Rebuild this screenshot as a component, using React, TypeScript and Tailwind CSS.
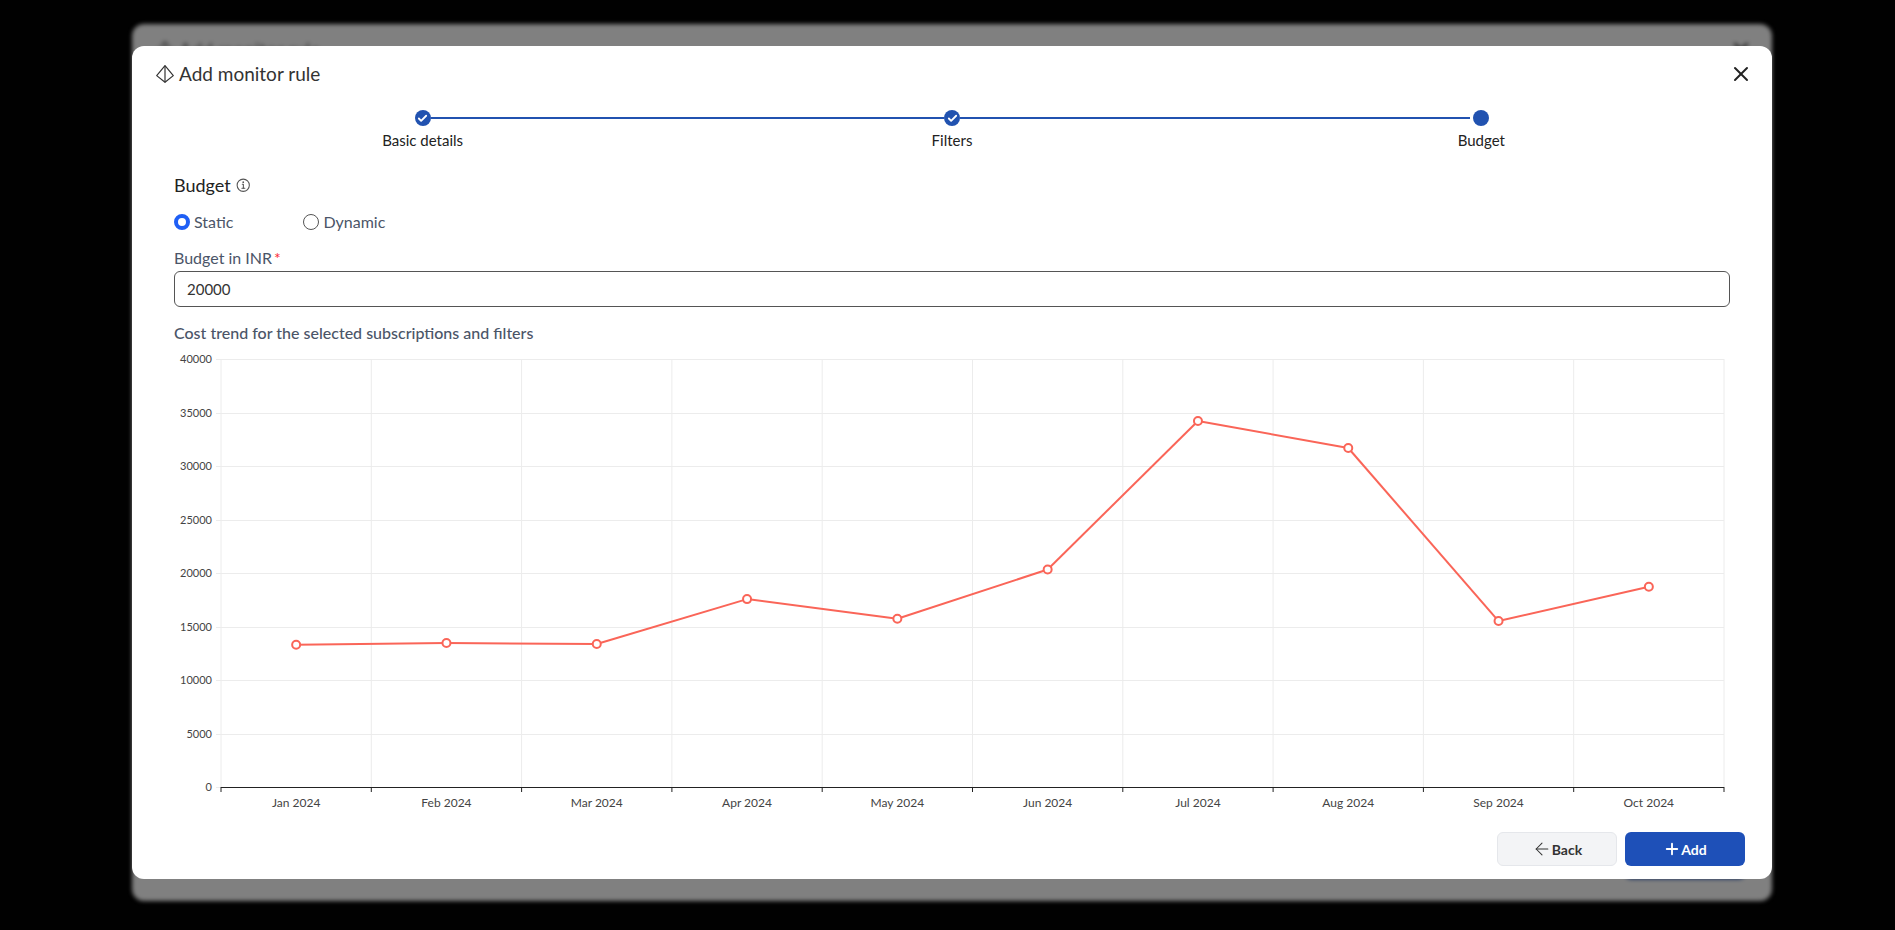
import { useState } from "react"
import { IoInformationCircleOutline } from "react-icons/io5"
import { ArrowLeft, Check, Plus, X } from "lucide-react"

const steps = [
    { label: "Basic details", done: true },
    { label: "Filters", done: true },
    { label: "Budget", done: false },
]

const costs = [
    { month: "Jan 2024", cost: 13300 },
    { month: "Feb 2024", cost: 13450 },
    { month: "Mar 2024", cost: 13370 },
    { month: "Apr 2024", cost: 17560 },
    { month: "May 2024", cost: 15720 },
    { month: "Jun 2024", cost: 20330 },
    { month: "Jul 2024", cost: 34200 },
    { month: "Aug 2024", cost: 31680 },
    { month: "Sep 2024", cost: 15510 },
    { month: "Oct 2024", cost: 18720 },
]

const MAX_COST = 40000
const TICK = 5000
const PLOT_HEIGHT = 428

const Logo = () => (
    <svg width="18" height="18" viewBox="0 0 18 18" fill="none" stroke="#333" strokeWidth="1.2" strokeLinejoin="round" aria-hidden="true">
        <path d="M9 .7 17.3 10.6 9 17.3.7 10.6Z" />
        <path d="M9 .7v16.6" />
    </svg>
)

const Title = () => (
    <div className="flex items-center gap-[5px]">
        <Logo />
        <span className="text-[19px] leading-6 text-[#333]">Add monitor rule</span>
    </div>
)

const Stepper = () => (
    <ol className="grid grid-cols-3">
        {steps.map((step, index) => (
            <li key={step.label} className="flex flex-col items-center gap-1">
                <div className="flex w-full items-center">
                    <span className={index > 0 ? "h-0.5 flex-1 bg-[#2152b0]" : "h-0.5 flex-1"} />
                    <span className={step.done ? "flex size-4 items-center justify-center rounded-full bg-[#2152b0] text-white" : "mx-[3px] size-4 rounded-full bg-[#2152b0]"}>
                        {step.done && <Check size={11} strokeWidth={4} />}
                    </span>
                    <span className={index < steps.length - 1 ? "h-0.5 flex-1 bg-[#2152b0]" : "h-0.5 flex-1"} />
                </div>
                <span className="text-[15px] leading-5 text-[#222]">{step.label}</span>
            </li>
        ))}
    </ol>
)

const CostChart = () => {
    const x = (index: number) => `${((index + 0.5) / costs.length) * 100}%`
    const y = (cost: number) => PLOT_HEIGHT - (cost / MAX_COST) * PLOT_HEIGHT
    const ticks = Array.from({ length: MAX_COST / TICK + 1 }, (_, i) => i * TICK)
    const edges = Array.from({ length: costs.length + 1 }, (_, i) => `${(i / costs.length) * 100}%`)

    return (
        <div className="pt-4 pr-1.5 pb-8 pl-[47px]">
            <svg className="h-[429px] w-full overflow-visible" role="img" aria-label="Monthly cost trend">
                {ticks.map((tick) => (
                    <g key={tick}>
                        <line x1="-5" x2="100%" y1={Math.round(y(tick)) + 0.5} y2={Math.round(y(tick)) + 0.5} stroke="#ececec" />
                        <text x="-9" y={y(tick) + 4} textAnchor="end" fill="#444" className="text-[11px]">{tick}</text>
                    </g>
                ))}
                {edges.map((edge) => (
                    <g key={edge}>
                        <line x1={edge} x2={edge} y1="0" y2={PLOT_HEIGHT} stroke="#ececec" />
                        <line x1={edge} x2={edge} y1={PLOT_HEIGHT} y2={PLOT_HEIGHT + 5} stroke="#222" />
                    </g>
                ))}
                <line x1="0" x2="100%" y1={PLOT_HEIGHT + 0.5} y2={PLOT_HEIGHT + 0.5} stroke="#222" />
                {costs.slice(1).map((item, i) => (
                    <line key={item.month} x1={x(i)} y1={y(costs[i].cost)} x2={x(i + 1)} y2={y(item.cost)} stroke="#fa6558" strokeWidth="2" />
                ))}
                {costs.map((item, i) => (
                    <g key={item.month}>
                        <circle cx={x(i)} cy={y(item.cost)} r="4" fill="#fff" stroke="#fa6558" strokeWidth="2" />
                        <text x={x(i)} y={PLOT_HEIGHT + 20} textAnchor="middle" fill="#444" className="text-[12px]">{item.month}</text>
                    </g>
                ))}
            </svg>
        </div>
    )
}

// Dimmed dialog one level below the open one
const DialogBehind = () => (
    <div aria-hidden="true" className="absolute inset-x-0 -inset-y-[22px] flex flex-col justify-between rounded-xl bg-[#808080] pt-[14px] pr-[19px] pb-[22px] pl-6 blur-[2px]">
        <div className="flex items-center justify-between">
            <Title />
            <X size={24} />
        </div>
        <div className="mr-2 h-8 w-[120px] self-end rounded-md bg-[#10295c]" />
    </div>
)

const App = () => {
    const [mode, setMode] = useState("static")
    const [budget, setBudget] = useState("20000")

    const radioClass = "size-4 appearance-none rounded-full border border-[#555] bg-white checked:border-4 checked:border-[#1f5ff5]"

    return (
        <main className="min-h-screen bg-[#010101] pt-[46px] pr-[123px] pb-[51px] pl-[132px] font-['Lato',sans-serif]">
            <div className="relative">
                <DialogBehind />
                <section role="dialog" aria-label="Add monitor rule" className="relative rounded-xl bg-white pt-4 pb-[13px]">
                    <header className="flex items-center justify-between pr-[19px] pl-6">
                        <Title />
                        <button type="button" aria-label="Close" className="text-[#222]"><X size={24} strokeWidth={2} /></button>
                    </header>

                    <div className="px-[26px] pt-6"><Stepper /></div>

                    <div className="px-[42px] pt-6">
                        <h2 className="flex items-center gap-1 text-[18px] leading-[22px] text-[#222]">
                            Budget <IoInformationCircleOutline size={17} className="text-[#555]" />
                        </h2>

                        <div className="flex gap-[70px] pt-4 text-[16px] leading-5 text-[#4b5568]">
                            <label className="flex items-center gap-1">
                                <input type="radio" name="mode" checked={mode === "static"} onChange={() => setMode("static")} className={radioClass} />
                                Static
                            </label>
                            <label className="flex items-center gap-1">
                                <input type="radio" name="mode" checked={mode === "dynamic"} onChange={() => setMode("dynamic")} className={radioClass} />
                                Dynamic
                            </label>
                        </div>

                        <label htmlFor="budget" className="block pt-4 pb-[3px] text-[16px] leading-5 text-[#4b5568]">
                            Budget in INR<span className="pl-0.5 text-red-500">*</span>
                        </label>
                        <input id="budget" value={budget} onChange={(e) => setBudget(e.target.value)} className="block h-9 w-full rounded-md border border-[#555] px-3 text-[15px] text-[#333]" />

                        <h3 className="pt-4 text-[16px] leading-5 font-medium text-[#4b5568]">Cost trend for the selected subscriptions and filters</h3>
                        <CostChart />
                    </div>

                    <footer className="flex justify-end gap-2 px-[27px] pt-3">
                        <button type="button" className="flex h-[34px] w-[120px] items-center justify-center rounded-md border border-gray-200 bg-gray-100 text-[14px] font-bold text-[#333]">
                            <ArrowLeft size={20} strokeWidth={1.25} /> Back
                        </button>
                        <button type="button" className="flex h-[34px] w-[120px] items-center justify-center rounded-md bg-[#1e50b8] text-[14px] font-bold text-white">
                            <Plus size={18} strokeWidth={2.5} /> Add
                        </button>
                    </footer>
                </section>
            </div>
        </main>
    )
}

export default App
